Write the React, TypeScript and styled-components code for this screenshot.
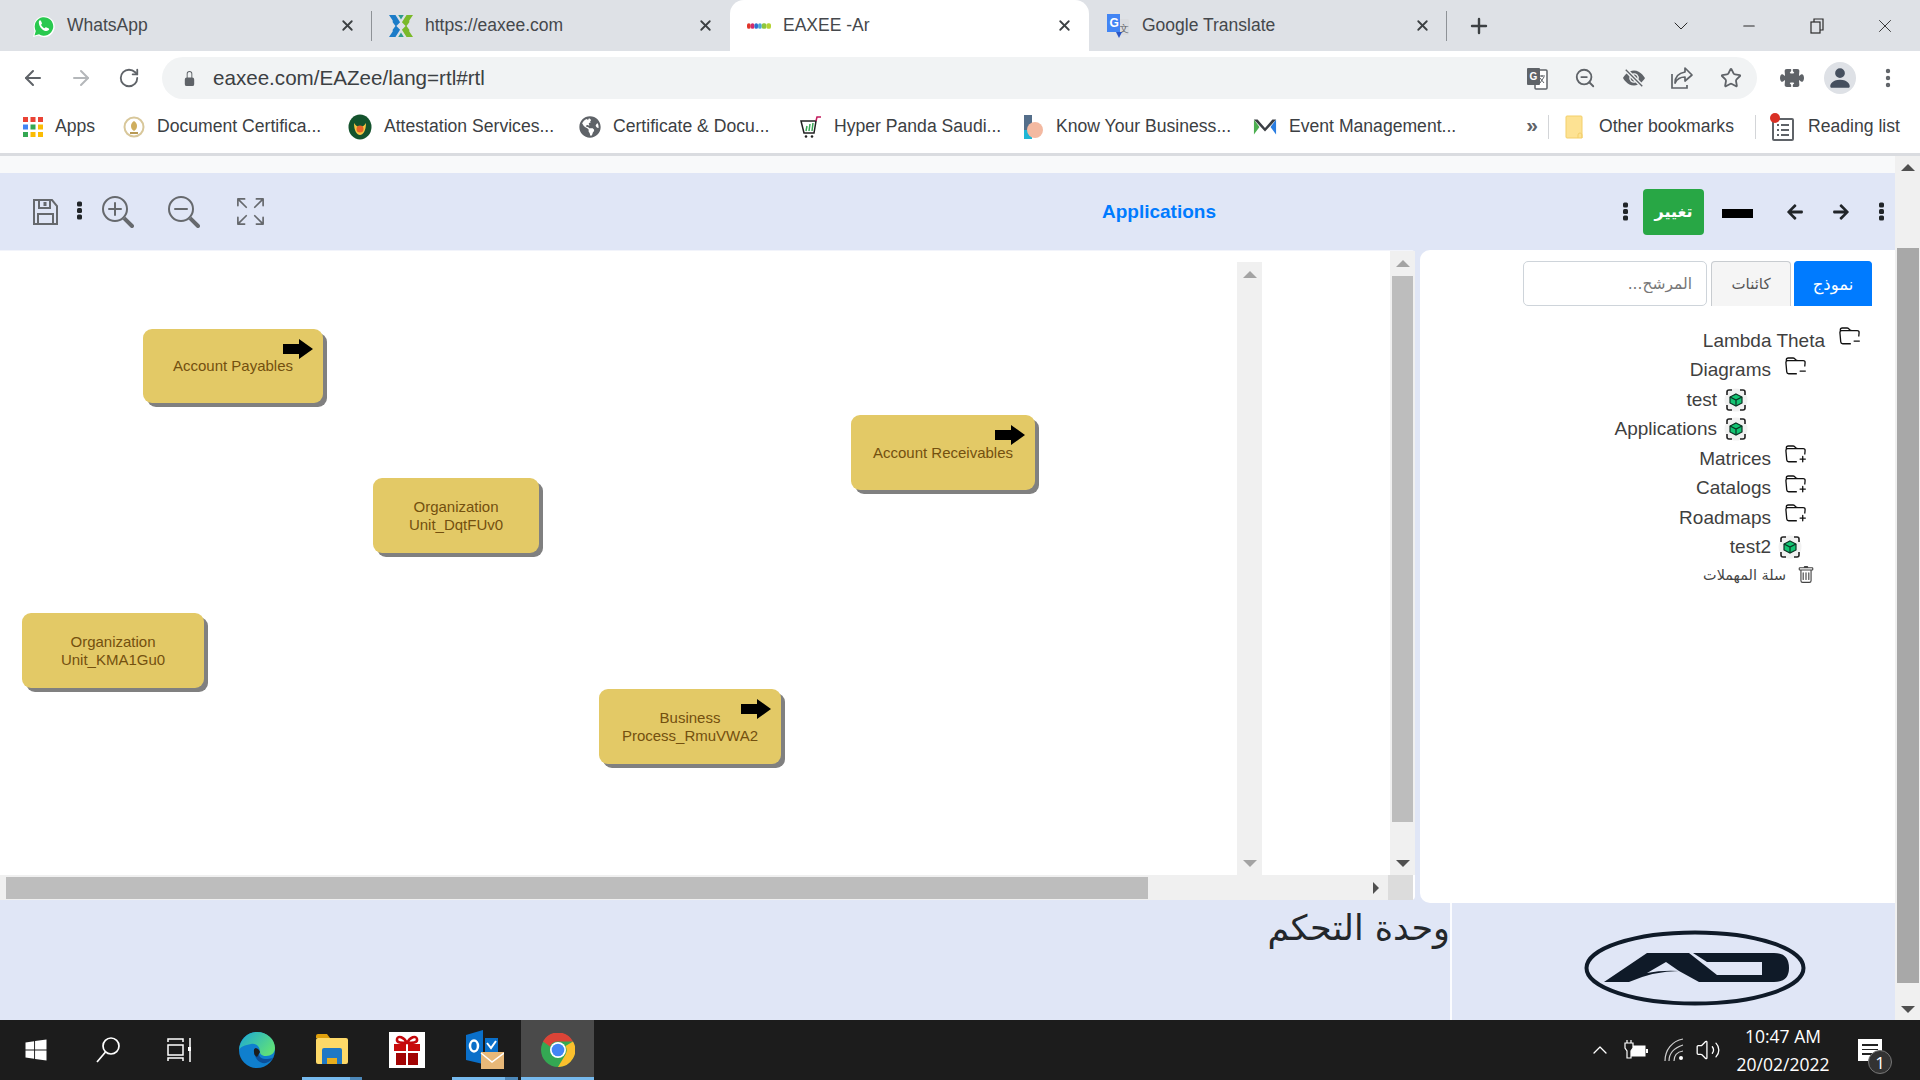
import React from "react";
import styled, { createGlobalStyle } from "styled-components";
import {
  ArrowLeft,
  ArrowRight,
  RotateCw,
  ZoomOut,
  Star,
  X,
  Plus,
  Minus,
  ChevronDown,
  MoreVertical,
  ChevronUp,
  Volume2,
} from "lucide-react";
import {
  BsArrowsFullscreen,
  BsEyeSlashFill,
  BsFolderMinus,
  BsFolderPlus,
  BsTrash,
  BsZoomIn,
  BsZoomOut,
  BsPuzzleFill,
  BsPersonFill,
  BsLockFill,
} from "react-icons/bs";
import { FaArrowLeft, FaArrowRight, FaWindows, FaGlobeAmericas } from "react-icons/fa";

const GlobalStyle = createGlobalStyle`
  html, body {
    margin: 0;
    padding: 0;
    width: 1920px;
    height: 1080px;
    overflow: hidden;
    background: #fff;
    font-family: "Liberation Sans", Arial, sans-serif;
  }
  * { box-sizing: border-box; }
`;

const Screen = styled.div`
  width: 1920px;
  height: 1080px;
  display: flex;
  flex-direction: column;
`;

/* browser chrome */
const TabStrip = styled.div`
  height: 51px;
  background: #dee1e6;
  display: flex;
  align-items: flex-end;
  padding-left: 14px;
`;

const Tab = styled.div<{ $active?: boolean; $sep?: boolean }>`
  position: relative;
  flex: 0 0 ${(p) => (p.$active ? "359px" : "358px")};
  height: 51px;
  display: flex;
  align-items: center;
  gap: 12px;
  padding: 0 16px 0 17px;
  font-size: 17.5px;
  color: #45484c;
  background: ${(p) => (p.$active ? "#fff" : "transparent")};
  border-radius: 14px 14px 0 0;
  ${(p) =>
    p.$sep &&
    `&::after {
      content: "";
      position: absolute;
      right: 0;
      top: 11px;
      height: 30px;
      width: 1px;
      background: #8e9297;
    }`}
`;

const TabLabel = styled.span`
  flex: 1;
  white-space: nowrap;
`;

const FavSlot = styled.span`
  width: 24px;
  height: 24px;
  display: flex;
  align-items: center;
  justify-content: center;
  flex: none;
`;

const NewTab = styled.div`
  margin: 0 0 0 20px;
  height: 51px;
  display: flex;
  align-items: center;
  color: #3c4043;
`;

const WindowControls = styled.div`
  margin-left: auto;
  display: flex;
  height: 51px;
  padding-right: 1px;
`;

const WindowButton = styled.span`
  width: 68px;
  display: flex;
  align-items: center;
  justify-content: center;
  color: #2a2a2a;
`;

const Toolbar = styled.div`
  height: 52px;
  background: #fff;
  display: flex;
  align-items: center;
  padding-left: 9px;
  padding-top: 2px;
`;

const NavButton = styled.span<{ $off?: boolean }>`
  width: 48px;
  display: flex;
  align-items: center;
  justify-content: center;
  flex: none;
  color: ${(p) => (p.$off ? "#b4b7ba" : "#5f6368")};
`;

const AddressBar = styled.div`
  width: 1595px;
  height: 42px;
  margin: 0 11px 0 9px;
  background: #f1f3f4;
  border-radius: 21px;
  display: flex;
  align-items: center;
  padding: 0 2px 0 20px;
  flex: none;
  color: #5f6368;
`;

const Url = styled.span`
  margin-left: 16px;
  font-size: 20.6px;
  color: #3c4043;
  flex: 1;
`;

const OmniIcon = styled.span`
  width: 48.5px;
  display: flex;
  align-items: center;
  justify-content: center;
  color: #5f6368;
`;

const Avatar = styled.span`
  width: 32px;
  height: 32px;
  border-radius: 50%;
  background: #dee1e6;
  color: #46505f;
  display: flex;
  align-items: center;
  justify-content: center;
`;

const BookmarkBar = styled.div`
  height: 50px;
  background: #fff;
  display: flex;
  align-items: center;
  padding: 0 0 3px 23px;
  font-size: 17.6px;
  color: #3c4043;
`;

const Bookmark = styled.div<{ $gap?: number; $w: number }>`
  display: flex;
  align-items: center;
  gap: ${(p) => p.$gap ?? 12}px;
  width: ${(p) => p.$w}px;
  flex: none;
  white-space: nowrap;
`;

const MoreBookmarks = styled.span`
  width: 32px;
  flex: none;
  text-align: center;
  font-size: 21px;
  font-weight: 700;
  color: #5f6368;
  line-height: 20px;
  padding-bottom: 3px;
`;

const BookmarkSep = styled.span`
  width: 1px;
  height: 24px;
  background: #d3d5d8;
  flex: none;
`;

const ChromeRule = styled.div`
  height: 3px;
  background: #dadce0;
`;

/* page */
const Page = styled.div`
  flex: 1;
  min-height: 0;
  display: flex;
`;

const Content = styled.div`
  width: 1895px;
  display: flex;
  flex-direction: column;
  background: #f8f9fa;
  padding-top: 17px;
`;

const HeaderBar = styled.div`
  height: 77px;
  background: #e0e6f6;
  display: flex;
  align-items: center;
`;

const LeftTools = styled.div`
  width: 708px;
  display: flex;
  align-items: center;
  padding-left: 33px;
  color: #66696d;
`;

const ToolSlot = styled.span<{ $w: number; $ml?: number }>`
  width: ${(p) => p.$w}px;
  margin-left: ${(p) => p.$ml ?? 0}px;
  display: flex;
  align-items: center;
  justify-content: center;
  flex: none;
`;

const Kebab = styled.span<{ $ml?: number; $mt?: number }>`
  display: block;
  width: 5px;
  height: 5px;
  margin-left: ${(p) => p.$ml ?? 0}px;
  margin-top: ${(p) => p.$mt ?? 0}px;
  background: #212529;
  border-radius: 1.5px;
  box-shadow: 0 -6.5px 0 #212529, 0 6.5px 0 #212529;
  flex: none;
`;

const Title = styled.div`
  flex: 1;
  text-align: center;
  color: #007bff;
  font-weight: 700;
  font-size: 19px;
`;

const RightTools = styled.div`
  width: 285px;
  display: flex;
  align-items: center;
  color: #212529;
  padding-left: 9px;
`;

const ChangeButton = styled.div`
  width: 61px;
  height: 46px;
  margin-left: 15px;
  border-radius: 4px;
  background: #28a745;
  color: #fff;
  font-size: 16px;
  font-weight: 700;
  font-family: "DejaVu Sans", sans-serif;
  display: flex;
  align-items: center;
  justify-content: center;
  direction: rtl;
`;

const BlackBar = styled.span`
  width: 31px;
  height: 9px;
  margin: 3px 0 0 18px;
  background: #000;
`;

const ArrowSlot = styled.span<{ $ml: number }>`
  margin-left: ${(p) => p.$ml}px;
  display: flex;
  color: #212529;
`;

const Main = styled.div`
  height: 653px;
  background: #e0e6f6;
  display: flex;
`;

const DiagramPanel = styled.div`
  width: 1415px;
  height: 650px;
  background: #fff;
  border-radius: 0 4px 4px 0;
  display: flex;
  flex-direction: column;
  border-top: 1px solid #f2f4fb;
`;

const DiagramRow = styled.div`
  flex: 1;
  min-height: 0;
  display: flex;
`;

const Canvas = styled.div`
  position: relative;
  width: 1237px;
`;

const Node = styled.div<{ $x: number; $y: number; $w: number; $h: number }>`
  position: absolute;
  left: ${(p) => p.$x}px;
  top: ${(p) => p.$y}px;
  width: ${(p) => p.$w}px;
  height: ${(p) => p.$h}px;
  background: #e3c966;
  border-radius: 9px;
  box-shadow: 4px 4px 0 #808080;
  color: #73500f;
  font-size: 15px;
  line-height: 18px;
  display: flex;
  align-items: center;
  justify-content: center;
  text-align: center;
  padding: 0 14px;
`;

const NodeArrow = styled.svg`
  position: absolute;
  right: 10px;
  top: 10px;
  width: 30px;
  height: 20px;
`;

const ScrollTrack = styled.div<{ $mt?: number }>`
  width: 25px;
  margin-top: ${(p) => p.$mt ?? 0}px;
  background: #f0f0f0;
  display: flex;
  flex-direction: column;
  align-items: center;
  flex: none;
`;

const Blank = styled.div`
  flex: 1;
`;

const ArrowBox = styled.div<{ $h?: number }>`
  height: ${(p) => p.$h ?? 24}px;
  display: flex;
  align-items: center;
  justify-content: center;
  flex: none;
`;

const Caret = styled.span<{ $dir: "up" | "down" | "right"; $color: string }>`
  display: block;
  width: 0;
  height: 0;
  ${(p) =>
    p.$dir === "up" &&
    `border-left: 7px solid transparent; border-right: 7px solid transparent; border-bottom: 7px solid ${p.$color};`}
  ${(p) =>
    p.$dir === "down" &&
    `border-left: 7px solid transparent; border-right: 7px solid transparent; border-top: 7px solid ${p.$color};`}
  ${(p) =>
    p.$dir === "right" &&
    `border-top: 6px solid transparent; border-bottom: 6px solid transparent; border-left: 6px solid ${p.$color};`}
`;

const VThumb = styled.div<{ $color: string; $w: number; $h: number }>`
  width: ${(p) => p.$w}px;
  height: ${(p) => p.$h}px;
  background: ${(p) => p.$color};
  flex: none;
`;

const HBarRow = styled.div`
  height: 25px;
  display: flex;
`;

const HTrack = styled.div`
  width: 1388px;
  height: 25px;
  background: #f0f0f0;
  display: flex;
  align-items: center;
  padding-left: 6px;
`;

const HThumb = styled.div`
  width: 1142px;
  height: 22px;
  background: #bdbdbd;
`;

const HEnd = styled.div`
  margin-left: auto;
  width: 15px;
  display: flex;
  align-items: center;
`;

const ScrollCorner = styled.div`
  width: 25px;
  background: #dcdcdc;
`;

const TreePanel = styled.div`
  width: 475px;
  margin-left: 5px;
  background: #fff;
  border-radius: 10px 0 0 10px;
  padding-top: 11px;
`;

const TabsRow = styled.div`
  display: flex;
  direction: rtl;
  padding-right: 23px;
  height: 45px;
  margin-bottom: 20px;
`;

const ModelTab = styled.div<{ $active?: boolean }>`
  width: ${(p) => (p.$active ? 78 : 80)}px;
  height: 45px;
  margin-left: ${(p) => (p.$active ? 3 : 4)}px;
  border: 1px solid ${(p) => (p.$active ? "#007bff" : "#c8ccd0")};
  border-bottom: none;
  border-radius: 4px 4px 0 0;
  background: ${(p) => (p.$active ? "#007bff" : "#f5f5f5")};
  color: ${(p) => (p.$active ? "#fff" : "#555")};
  font-family: "DejaVu Sans", sans-serif;
  font-size: ${(p) => (p.$active ? 16.5 : 15)}px;
  display: flex;
  align-items: center;
  justify-content: center;
`;

const FilterInput = styled.input`
  width: 184px;
  height: 45px;
  border: 1px solid #ced4da;
  border-radius: 5px;
  padding: 0 14px;
  direction: rtl;
  font-family: "DejaVu Sans", sans-serif;
  font-size: 15.5px;
  outline: none;
  background: #fff;
  &::placeholder {
    color: #777;
    opacity: 1;
  }
`;

const TreeRow = styled.div<{ $indent: number; $gap: number; $h?: number; $small?: boolean }>`
  height: ${(p) => p.$h ?? 29.5}px;
  display: flex;
  direction: rtl;
  align-items: center;
  gap: ${(p) => p.$gap}px;
  padding-right: ${(p) => p.$indent}px;
  font-size: ${(p) => (p.$small ? 14.4 : 19)}px;
  color: ${(p) => (p.$small ? "#444" : "#3f3f3f")};
  ${(p) => p.$small && `font-family: "DejaVu Sans", sans-serif;`}
`;

const TreeText = styled.bdi`
  white-space: nowrap;
`;

const FolderWrap = styled.span`
  display: flex;
  margin-top: -8px;
  color: #111;
`;

const Footer = styled.div`
  flex: 1;
  background: #e0e6f6;
  display: flex;
`;

const FooterTitle = styled.div`
  width: 1450px;
  font-family: "DejaVu Sans", serif;
  font-size: 35px;
  line-height: 50px;
  color: #23272b;
  text-align: right;
  direction: rtl;
`;

const FooterRule = styled.div`
  width: 2px;
  background: #fbfcff;
`;

const FooterLogo = styled.div`
  flex: 1;
  display: flex;
  align-items: center;
  justify-content: center;
  padding-left: 42px;
  padding-top: 13px;
`;

/* windows taskbar */
const Taskbar = styled.div`
  height: 60px;
  background: #1c1c1c;
  display: flex;
  align-items: center;
  color: #fff;
  flex: none;
`;

const TaskSlot = styled.div<{ $w: number; $open?: boolean; $current?: boolean }>`
  position: relative;
  width: ${(p) => p.$w}px;
  height: 60px;
  display: flex;
  align-items: center;
  justify-content: center;
  background: ${(p) => (p.$current ? "#4a4a4a" : "transparent")};
  ${(p) =>
    p.$open &&
    `&::after {
      content: "";
      position: absolute;
      left: ${p.$current ? 0 : 3}px;
      right: ${p.$current ? 0 : 3}px;
      bottom: 0;
      height: 3px;
      background: ${p.$current ? "#76b9ed" : "linear-gradient(to right, #76b9ed 80%, #4c87b8 80%)"};
    }`}
`;

const Tray = styled.div`
  margin-left: auto;
  display: flex;
  align-items: center;
  height: 60px;
  padding-right: 38px;
`;

const TrayIcon = styled.span<{ $w: number }>`
  width: ${(p) => p.$w}px;
  display: flex;
  align-items: center;
  justify-content: center;
  flex: none;
`;

const Clock = styled.div`
  width: 110px;
  text-align: center;
  font-family: "Open Sans", sans-serif;
  font-size: 17.5px;
  line-height: 28px;
  color: #fff;
`;

const Notify = styled.div`
  position: relative;
  margin-left: 20px;
  width: 24px;
  height: 22px;
  background: #fff;
  display: flex;
  flex-direction: column;
  gap: 3px;
  padding: 5px 4px;
`;

const NotifyLine = styled.span`
  height: 1.5px;
  background: #222;
`;

const NotifyBadge = styled.span`
  position: absolute;
  right: -10px;
  bottom: -13px;
  width: 24px;
  height: 24px;
  border-radius: 50%;
  background: #333;
  border: 1.5px solid #777;
  color: #fff;
  font-family: "Open Sans", sans-serif;
  font-size: 17px;
  display: flex;
  align-items: center;
  justify-content: center;
`;

/* small drawings */
const WhatsAppIcon = () => (
  <svg width="24" height="24" viewBox="0 0 24 24">
    <path d="M2 23l1.600-6A10.500 10.500 0 1 1 7.500 21.500z" fill="#fff" />
    <path d="M3.500 21.500l1.300-4.600A9.300 9.300 0 1 1 8 20.300z" fill="#29c94f" />
    <path
      d="M8 7c.6-1 1.500-1 2 0l.9 1.900c.2.500 0 1-.5 1.500l-.4.400c.6 1.500 2 2.900 3.600 3.500l.5-.5c.4-.5.9-.6 1.400-.4l1.900.9c1 .5 1 1.400 0 2-1.500 1-3.500.9-6-.9S7.300 9.500 8 7z"
      fill="#fff"
    />
  </svg>
);

const EaxeeIcon = () => (
  <svg width="26" height="26" viewBox="0 0 26 26">
    <path d="M0 1h7l5 8-4 4 4 4-5 8H0l4-6v-2l3-4-3-4V7z" fill="#1c7cc8" />
    <path d="M26 1h-7l-5 8 4 4-4 4 5 8h7l-4-6v-2l-3-4 3-4V7z" fill="#7ab929" />
    <path d="M10 1h6l-3 5zM10 25h6l-3-5z" fill="#2f9b8f" />
  </svg>
);

const EaxeeArIcon = () => (
  <svg width="26" height="8" viewBox="0 0 26 8">
    <rect x="0" y="1" width="4" height="6" rx="2" fill="#e0352b" />
    <rect x="4" y="1" width="4" height="6" rx="2" fill="#d02b6b" />
    <rect x="8" y="1" width="4" height="6" rx="2" fill="#2f6fd0" />
    <rect x="12" y="1" width="4" height="6" rx="2" fill="#4aa8d8" />
    <rect x="16" y="1" width="5" height="6" rx="2" fill="#8cc63f" />
    <rect x="21" y="1" width="5" height="6" rx="2" fill="#b5d334" />
  </svg>
);

const TranslateIcon = () => (
  <svg width="24" height="26" viewBox="0 0 24 26">
    <rect x="10" y="6" width="13" height="16" rx="1.500" fill="#dadce0" />
    <text x="13" y="19" fontSize="10" fill="#5f6368" fontFamily="Liberation Sans">
      文
    </text>
    <path d="M1 1h13v18H1z" fill="#4285f4" />
    <text x="3.500" y="14" fontSize="12" fontWeight="700" fill="#fff" fontFamily="Liberation Sans">
      G
    </text>
    <path d="M10 19h6l-3 6z" fill="#2a56c6" />
  </svg>
);

const TranslateOmni = () => (
  <svg width="24" height="24" viewBox="0 0 24 24">
    <rect x="10" y="4" width="12" height="19" rx="1" fill="#fff" stroke="#5f6368" strokeWidth="1.500" />
    <path d="M14 10h6M17 9v2M15 17l4-6M15 12l4 5" stroke="#5f6368" strokeWidth="1" fill="none" />
    <rect x="2" y="2" width="13" height="17" rx="1" fill="#5f6368" />
    <text x="4.500" y="14" fontSize="10" fontWeight="700" fill="#fff" fontFamily="Liberation Sans">
      G
    </text>
  </svg>
);

const ShareIcon = () => (
  <svg width="24" height="24" viewBox="0 0 24 24" fill="none" stroke="#5f6368" strokeWidth="1.700">
    <path d="M2 8v14h15v-3" />
    <path d="M15 2l7 7-7 6v-4c-5 0-8 2-10 6 0-6 4-10 10-11z" strokeLinejoin="round" />
  </svg>
);

const AppsIcon = () => (
  <svg width="20" height="20" viewBox="0 0 20 20">
    {[
      ["#ea4335", "#ea4335", "#ea4335"],
      ["#4285f4", "#34a853", "#fbbc04"],
      ["#34a853", "#fbbc04", "#fbbc04"],
    ].map((row, y) =>
      row.map((c, x) => <rect key={`${x}${y}`} x={x * 7.5} y={y * 7.5} width="5" height="5" fill={c} />),
    )}
  </svg>
);

const SaudiIcon = () => (
  <svg width="22" height="24" viewBox="0 0 22 24">
    <circle cx="11" cy="12" r="9.500" fill="#fff" stroke="#d8c79a" strokeWidth="2" />
    <path d="M11 6c2 1 3 3 3 5s-1 4-3 5c-2-1-3-3-3-5s1-4 3-5z" fill="#cfae5e" />
    <rect x="7" y="17" width="8" height="2" fill="#b89a55" />
  </svg>
);

const AttestIcon = () => (
  <svg width="24" height="26" viewBox="0 0 24 26">
    <ellipse cx="12" cy="13" rx="11.500" ry="12.500" fill="#14532d" />
    <path d="M6 9c0 8 3 12 6 12s6-4 6-12c-2 3-4 4-6 4s-4-1-6-4z" fill="#f5c542" />
    <circle cx="12" cy="15" r="3.500" fill="#e8642a" />
  </svg>
);

const HyperIcon = () => (
  <svg width="24" height="24" viewBox="0 0 24 24">
    <path d="M3 6h15l-2 12H6z" fill="#fff" stroke="#222" strokeWidth="1.500" />
    <path d="M8 16l1-5M11 16l1-7M14 16l1-8" stroke="#3aa655" strokeWidth="1.500" />
    <path d="M18 6l1-4h4" stroke="#c2185b" strokeWidth="1.500" fill="none" />
    <circle cx="8" cy="21.500" r="1.300" fill="#222" />
    <circle cx="14" cy="21.500" r="1.300" fill="#222" />
  </svg>
);

const KnowIcon = () => (
  <svg width="20" height="24" viewBox="0 0 20 24">
    <rect x="0" y="0" width="8" height="17" fill="#546e8a" />
    <rect x="0" y="15" width="8" height="9" fill="#1fb6d5" />
    <circle cx="11" cy="15" r="8" fill="#f3b9a1" />
  </svg>
);

const EventIcon = () => (
  <svg width="24" height="18" viewBox="0 0 26 18">
    <path d="M1 1l6 8-6 8z" fill="#4caf50" />
    <path d="M25 1l-6 8 6 8z" fill="#2a7de1" />
    <path d="M1 1h4l8 9 8-9h4l-12 13z" fill="#3b3f44" />
  </svg>
);

const FolderIcon = () => (
  <svg width="18" height="24" viewBox="0 0 18 24">
    <path d="M1 2a1 1 0 0 1 1-1h14a1 1 0 0 1 1 1v21H2a1 1 0 0 1-1-1z" fill="#fde293" stroke="#f3cf6b" />
    <path d="M13 23v-3a2 2 0 0 1 4 0v3" fill="none" stroke="#f3cf6b" />
  </svg>
);

const ReadingIcon = () => (
  <svg width="24" height="28" viewBox="0 0 24 28">
    <rect x="3" y="6" width="20" height="21" rx="1" fill="#fff" stroke="#5f6368" strokeWidth="2" />
    <path d="M7 12h2M11 12h8M7 17h2M11 17h8M7 22h2M11 22h8" stroke="#5f6368" strokeWidth="2" />
    <circle cx="5" cy="5" r="5" fill="#d93025" />
  </svg>
);

const SaveIcon = () => (
  <svg width="25" height="26" viewBox="0 0 25 26" fill="none" stroke="#66696d" strokeWidth="2">
    <path d="M1 1h18l5 6v18H1z" />
    <path d="M6 1v8h11V1" />
    <path d="M12 3v4" strokeWidth="3" />
    <path d="M5 25V15h15v10" />
  </svg>
);

const CubeBadge = () => (
  <svg width="24" height="30" viewBox="0 0 24 30" style={{ flex: "none" }}>
    <circle cx="12" cy="15" r="11.500" fill="#f1f1f1" />
    <path
      d="M3 10V7a2 2 0 0 1 2-2h3M16 5h3a2 2 0 0 1 2 2v3M21 20v3a2 2 0 0 1-2 2h-3M8 25H5a2 2 0 0 1-2-2v-3"
      fill="none"
      stroke="#222"
      strokeWidth="1.600"
    />
    <path d="M12 9l6 3v6l-6 3-6-3v-6z" fill="#13c472" stroke="#0b3324" strokeWidth="1.200" />
    <path d="M6 12l6 3 6-3M12 15v6" fill="none" stroke="#0b3324" strokeWidth="1.200" />
  </svg>
);

const StartSearch = () => (
  <svg width="24" height="26" viewBox="0 0 24 26" fill="none" stroke="#fff" strokeWidth="1.700">
    <circle cx="15" cy="9" r="8" />
    <path d="M9.500 15L1 25" />
  </svg>
);

const TaskViewIcon = () => (
  <svg width="24" height="24" viewBox="0 0 24 24" fill="none" stroke="#fff" strokeWidth="1.500">
    <path d="M1 4V1h15v3M1 23v-3h15v3" />
    <rect x="1" y="7" width="15" height="10" />
    <path d="M23 0v24" />
    <rect x="21" y="9" width="4" height="4" fill="#fff" stroke="none" />
  </svg>
);

const EdgeIcon = () => (
  <svg width="36" height="36" viewBox="0 0 36 36">
    <defs>
      <linearGradient id="edgeTop" x1="0" y1="0" x2="1" y2="0.600">
        <stop offset="0" stopColor="#1aa6d8" />
        <stop offset="1" stopColor="#5fe07a" />
      </linearGradient>
    </defs>
    <circle cx="18" cy="18" r="18" fill="#0f7fce" />
    <path d="M0 18C1 7 9 0 18 0c10 0 18 7 18 16 0 5-4 8-9 8-4 0-6-2-6-4 0-6-4-9-9-8-6 1-11 3-12 6z" fill="url(#edgeTop)" />
    <path d="M15 18c0 9 6 14 12 13 3-1 6-3 8-6-3 2-6 2-9 2-5 0-7-4-6-8-1-3-4-4-5-1z" fill="#0b4f9a" />
    <path d="M21 20c-1-4-7-6-6 0 0 2 1 4 3 5" fill="#1c1c1c" />
  </svg>
);

const ExplorerIcon = () => (
  <svg width="32" height="34" viewBox="0 0 32 34">
    <path d="M0 3a2 2 0 0 1 2-2h9l3 4H0z" fill="#e0a00c" />
    <rect x="0" y="5" width="32" height="26" rx="2" fill="#fdd968" />
    <path d="M6 31V17a2 2 0 0 1 2-2h16a2 2 0 0 1 2 2v14h-5v-6H11v6z" fill="#1f78c4" />
    <rect x="11" y="25" width="10" height="6" fill="#e8ae1e" />
  </svg>
);

const GiftIcon = () => (
  <svg width="36" height="36" viewBox="0 0 36 36">
    <rect width="36" height="36" fill="#fff" />
    <path d="M18 11c-3-6-9-8-10-4s5 4 10 4zm0 0c3-6 9-8 10-4s-5 4-10 4z" fill="none" stroke="#c4080c" strokeWidth="2.500" />
    <path d="M5 12h12v7H5zM19 12h12v7H19z" fill="#c80b0b" />
    <path d="M7 21h10v12H7zM19 21h10v12H19z" fill="#a20404" />
  </svg>
);

const OutlookIcon = () => (
  <svg width="38" height="40" viewBox="0 0 38 40">
    <path d="M0 5l17-5v34L0 30z" fill="#0a6fc9" />
    <ellipse cx="8" cy="16" rx="4" ry="5.500" fill="none" stroke="#fff" strokeWidth="2.500" />
    <rect x="19" y="8" width="13" height="15" fill="#0a6fc9" />
    <path d="M21 13l4 5 5-7" fill="none" stroke="#fff" strokeWidth="2" />
    <rect x="15" y="22" width="23" height="17" fill="#e8b878" />
    <path d="M15 23l11 9 12-9" fill="none" stroke="#fff" strokeWidth="1.500" />
  </svg>
);

const ChromeIcon = () => (
  <svg width="34" height="34" viewBox="0 0 34 34">
    <circle cx="17" cy="17" r="17" fill="#34a853" />
    <path d="M2 8.500A17 17 0 0 1 32 8.500H17a8.500 8.500 0 0 0-8 5z" fill="#db4437" />
    <path d="M32 8.500A17 17 0 0 1 17 34l7.500-12.500a8.500 8.500 0 0 0 0-8.500z" fill="#fbc02d" />
    <circle cx="17" cy="17" r="8" fill="#fff" />
    <circle cx="17" cy="17" r="6.300" fill="#4285f4" />
  </svg>
);

const PluggedBattery = () => (
  <svg width="24" height="20" viewBox="0 0 24 20" fill="none">
    <rect x="4" y="5" width="18" height="12" fill="#fff" stroke="#1c1c1c" />
    <rect x="22" y="9" width="2" height="4" fill="#fff" />
    <path d="M3 0v3M7 0v3M1 3h8v5l-2 3v7H3v-7L1 8z" stroke="#fff" strokeWidth="1.200" fill="#1c1c1c" />
  </svg>
);

const WifiIcon = () => (
  <svg width="20" height="24" viewBox="0 0 20 24" fill="none" stroke="#cfcfcf" strokeWidth="1.200">
    <path d="M1 23C1 12 8 3 19 1" />
    <path d="M5 23c0-8 5-13 14-16" />
    <path d="M10 23c0-5 3-9 9-10" />
    <circle cx="17" cy="20" r="2" fill="#fff" stroke="none" />
  </svg>
);

const AdLogo = () => (
  <svg width="222" height="76" viewBox="0 0 222 76">
    <ellipse cx="111" cy="38" rx="108.500" ry="35.500" fill="none" stroke="#0f1a28" strokeWidth="4" />
    <path
      fillRule="evenodd"
      fill="#0f1a28"
      d="M20 52L63 23H190Q205 23 205 38Q205 52 190 52H115L95 41Q70 41 45 52ZM63 43L82 32L95 41Q78 40 63 43ZM105 23L109 23L123 32H178V45H133Z"
    />
  </svg>
);

const NodeArrowIcon = () => (
  <NodeArrow viewBox="0 0 30 20">
    <path d="M0 5h16V0l14 10-14 10v-5H0z" fill="#000" />
  </NodeArrow>
);

const tabs = [
  { label: "WhatsApp", icon: <WhatsAppIcon />, sep: true },
  { label: "https://eaxee.com", icon: <EaxeeIcon />, sep: false },
  { label: "EAXEE -Ar", icon: <EaxeeArIcon />, active: true },
  { label: "Google Translate", icon: <TranslateIcon />, sep: true },
];

const bookmarks = [
  { label: "Apps", icon: <AppsIcon />, w: 100 },
  { label: "Document Certifica...", icon: <SaudiIcon />, w: 225 },
  { label: "Attestation Services...", icon: <AttestIcon />, w: 231 },
  { label: "Certificate & Docu...", icon: <FaGlobeAmericas size={22} color="#5f6368" />, w: 219 },
  { label: "Hyper Panda Saudi...", icon: <HyperIcon />, w: 226 },
  { label: "Know Your Business...", icon: <KnowIcon />, w: 229 },
  { label: "Event Management...", icon: <EventIcon />, w: 263 },
];

const nodes = [
  { text: "Account Payables", x: 143, y: 78, w: 180, h: 74, arrow: true },
  { text: "Account Receivables", x: 851, y: 164, w: 184, h: 75, arrow: true },
  { text: "Organization Unit_DqtFUv0", x: 373, y: 227, w: 166, h: 75 },
  { text: "Organization Unit_KMA1Gu0", x: 22, y: 362, w: 182, h: 75 },
  { text: "Business Process_RmuVWA2", x: 599, y: 438, w: 182, h: 75, arrow: true },
];

const treeRows = [
  { label: "Lambda Theta", indent: 35, gap: 14, icon: "minus" },
  { label: "Diagrams", indent: 89, gap: 14, icon: "minus" },
  { label: "test", indent: 147, gap: 7, icon: "cube" },
  { label: "Applications", indent: 147, gap: 7, icon: "cube" },
  { label: "Matrices", indent: 89, gap: 14, icon: "plus" },
  { label: "Catalogs", indent: 89, gap: 14, icon: "plus" },
  { label: "Roadmaps", indent: 89, gap: 14, icon: "plus" },
  { label: "test2", indent: 93, gap: 7, icon: "cube" },
];

const TreeGlyph: React.FC<{ kind: string }> = ({ kind }) => {
  if (kind === "cube") return <CubeBadge />;
  return (
    <FolderWrap>
      {kind === "minus" ? <BsFolderMinus size={21} /> : <BsFolderPlus size={21} />}
    </FolderWrap>
  );
};

const App: React.FC = () => {
  return (
    <Screen>
      <GlobalStyle />
      <TabStrip>
        {tabs.map((t) => (
          <Tab key={t.label} $active={t.active} $sep={t.sep}>
            <FavSlot>{t.icon}</FavSlot>
            <TabLabel>{t.label}</TabLabel>
            <X size={17} strokeWidth={2.6} color="#3c4043" />
          </Tab>
        ))}
        <NewTab>
          <Plus size={24} strokeWidth={2.4} />
        </NewTab>
        <WindowControls>
          <WindowButton>
            <ChevronDown size={24} strokeWidth={1} />
          </WindowButton>
          <WindowButton>
            <Minus size={18} strokeWidth={1.4} />
          </WindowButton>
          <WindowButton>
            <svg width="14" height="16" viewBox="0 0 14 16" fill="none" stroke="#2a2a2a" strokeWidth="1.200">
              <rect x="1" y="4" width="9" height="11" />
              <path d="M4 4V1h9v11h-3" />
            </svg>
          </WindowButton>
          <WindowButton>
            <X size={22} strokeWidth={1} />
          </WindowButton>
        </WindowControls>
      </TabStrip>

      <Toolbar>
        <NavButton>
          <ArrowLeft size={24} strokeWidth={2} />
        </NavButton>
        <NavButton $off>
          <ArrowRight size={24} strokeWidth={2} />
        </NavButton>
        <NavButton>
          <RotateCw size={22} strokeWidth={2} />
        </NavButton>
        <AddressBar>
          <BsLockFill size={15} />
          <Url>eaxee.com/EAZee/lang=rtl#rtl</Url>
          <OmniIcon>
            <TranslateOmni />
          </OmniIcon>
          <OmniIcon>
            <ZoomOut size={22} strokeWidth={2} />
          </OmniIcon>
          <OmniIcon>
            <BsEyeSlashFill size={22} />
          </OmniIcon>
          <OmniIcon>
            <ShareIcon />
          </OmniIcon>
          <OmniIcon>
            <Star size={22} strokeWidth={2} />
          </OmniIcon>
        </AddressBar>
        <NavButton>
          <BsPuzzleFill size={24} />
        </NavButton>
        <NavButton>
          <Avatar>
            <BsPersonFill size={26} />
          </Avatar>
        </NavButton>
        <NavButton>
          <MoreVertical size={24} strokeWidth={2.4} />
        </NavButton>
      </Toolbar>

      <BookmarkBar>
        {bookmarks.map((b) => (
          <Bookmark key={b.label} $w={b.w} $gap={12}>
            {b.icon}
            <span>{b.label}</span>
          </Bookmark>
        ))}
        <MoreBookmarks>»</MoreBookmarks>
        <BookmarkSep />
        <Bookmark $w={206} $gap={16}>
          <span />
          <FolderIcon />
          <span>Other bookmarks</span>
        </Bookmark>
        <BookmarkSep />
        <Bookmark $w={163} $gap={14}>
          <span />
          <ReadingIcon />
          <span>Reading list</span>
        </Bookmark>
      </BookmarkBar>
      <ChromeRule />

      <Page>
        <Content>
          <HeaderBar>
            <LeftTools>
              <SaveIcon />
              <Kebab $ml={19} $mt={-3} />
              <ToolSlot $w={66} $ml={3}>
                <BsZoomIn size={32} />
              </ToolSlot>
              <ToolSlot $w={66}>
                <BsZoomOut size={32} />
              </ToolSlot>
              <ToolSlot $w={66}>
                <BsArrowsFullscreen size={27} />
              </ToolSlot>
            </LeftTools>
            <Title>Applications</Title>
            <RightTools>
              <Kebab $ml={4} />
              <ChangeButton>تغيير</ChangeButton>
              <BlackBar />
              <ArrowSlot $ml={33}>
                <FaArrowLeft size={18} />
              </ArrowSlot>
              <ArrowSlot $ml={28}>
                <FaArrowRight size={18} />
              </ArrowSlot>
              <Kebab $ml={29} />
            </RightTools>
          </HeaderBar>

          <Main>
            <DiagramPanel>
              <DiagramRow>
                <Canvas>
                  {nodes.map((n) => (
                    <Node key={n.text} $x={n.x} $y={n.y} $w={n.w} $h={n.h}>
                      {n.text}
                      {n.arrow && <NodeArrowIcon />}
                    </Node>
                  ))}
                </Canvas>
                <ScrollTrack $mt={11}>
                  <ArrowBox>
                    <Caret $dir="up" $color="#a3a3a3" />
                  </ArrowBox>
                  <Blank />
                  <ArrowBox>
                    <Caret $dir="down" $color="#a3a3a3" />
                  </ArrowBox>
                </ScrollTrack>
                <Blank />
                <ScrollTrack>
                  <ArrowBox $h={25}>
                    <Caret $dir="up" $color="#a3a3a3" />
                  </ArrowBox>
                  <VThumb $color="#bdbdbd" $w={21} $h={546} />
                  <Blank />
                  <ArrowBox>
                    <Caret $dir="down" $color="#505050" />
                  </ArrowBox>
                </ScrollTrack>
              </DiagramRow>
              <HBarRow>
                <HTrack>
                  <HThumb />
                  <HEnd>
                    <Caret $dir="right" $color="#505050" />
                  </HEnd>
                </HTrack>
                <ScrollCorner />
              </HBarRow>
            </DiagramPanel>

            <TreePanel>
              <TabsRow>
                <ModelTab $active>نموذج</ModelTab>
                <ModelTab>كائنات</ModelTab>
                <FilterInput placeholder="المرشح..." readOnly />
              </TabsRow>
              {treeRows.map((r) => (
                <TreeRow key={r.label} $indent={r.indent} $gap={r.gap}>
                  <TreeGlyph kind={r.icon} />
                  <TreeText>{r.label}</TreeText>
                </TreeRow>
              ))}
              <TreeRow $indent={80} $gap={11} $h={26} $small>
                <BsTrash size={18} />
                <TreeText>سلة المهملات</TreeText>
              </TreeRow>
            </TreePanel>
          </Main>

          <Footer>
            <FooterTitle>وحدة التحكم</FooterTitle>
            <FooterRule />
            <FooterLogo>
              <AdLogo />
            </FooterLogo>
          </Footer>
        </Content>

        <ScrollTrack>
          <ArrowBox $h={22}>
            <Caret $dir="up" $color="#505050" />
          </ArrowBox>
          <ArrowBox $h={70} />
          <VThumb $color="#a8a8a8" $w={22} $h={735} />
          <Blank />
          <ArrowBox $h={22}>
            <Caret $dir="down" $color="#505050" />
          </ArrowBox>
        </ScrollTrack>
      </Page>

      <Taskbar>
        <TaskSlot $w={72}>
          <FaWindows size={24} />
        </TaskSlot>
        <TaskSlot $w={71}>
          <StartSearch />
        </TaskSlot>
        <TaskSlot $w={72}>
          <TaskViewIcon />
        </TaskSlot>
        <TaskSlot $w={84}>
          <EdgeIcon />
        </TaskSlot>
        <TaskSlot $w={66} $open>
          <ExplorerIcon />
        </TaskSlot>
        <TaskSlot $w={84}>
          <GiftIcon />
        </TaskSlot>
        <TaskSlot $w={72} $open>
          <OutlookIcon />
        </TaskSlot>
        <TaskSlot $w={73} $open $current>
          <ChromeIcon />
        </TaskSlot>
        <Tray>
          <TrayIcon $w={24}>
            <ChevronUp size={24} strokeWidth={1.3} />
          </TrayIcon>
          <TrayIcon $w={48}>
            <PluggedBattery />
          </TrayIcon>
          <TrayIcon $w={28}>
            <WifiIcon />
          </TrayIcon>
          <TrayIcon $w={40}>
            <Volume2 size={26} strokeWidth={1.2} />
          </TrayIcon>
          <Clock>
            10:47 AM
            <br />
            20/02/2022
          </Clock>
          <Notify>
            <NotifyLine />
            <NotifyLine />
            <NotifyLine />
            <NotifyBadge>1</NotifyBadge>
          </Notify>
        </Tray>
      </Taskbar>
    </Screen>
  );
};

export default App;
